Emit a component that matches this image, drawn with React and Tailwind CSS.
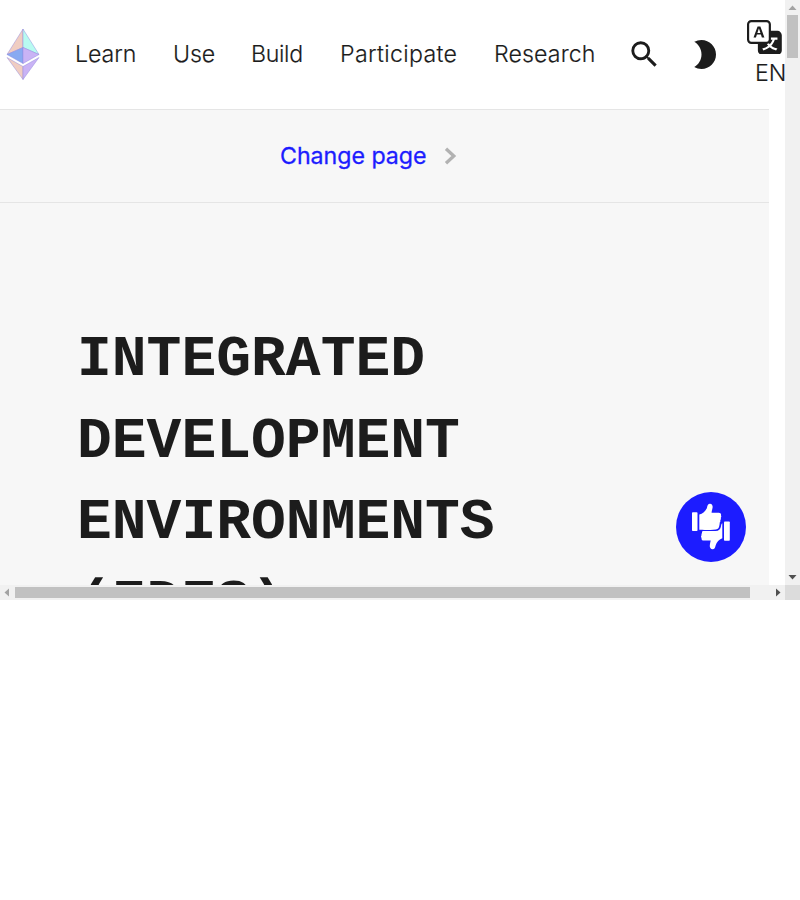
import React from "react";
import { MdSearch, MdBrightness2 } from "react-icons/md";
import { BsTranslate } from "react-icons/bs";

const links = [
  { label: "Learn", box: "w-[98px]", text: "tracking-[-0.08px]" },
  { label: "Use", box: "w-[78px]", text: "tracking-[-0.15px]" },
  { label: "Build", box: "w-[89px]", text: "tracking-[-0.35px]" },
  { label: "Participate", box: "w-[154px]", text: "tracking-[0.32px]" },
  { label: "Research", box: "w-[102px]", text: "tracking-[0.1px]" },
];

function EthLogo() {
  return (
    <svg className="mb-[1px] ml-[6px] h-[52px] w-[34px] shrink-0" viewBox="0 0 34 52">
      <g stroke="#8f84dd" strokeOpacity="0.5" strokeWidth="0.9" strokeLinejoin="round">
        <path d="M17 1 1 26.5 17 19.5Z" fill="#f0cdc2" />
        <path d="M17 1 33 26.5 17 19.5Z" fill="#b8fbf1" />
        <path d="M1 26.5 17 19.5V35.5Z" fill="#88aaf1" />
        <path d="M33 26.5 17 19.5V35.5Z" fill="#c9b3f5" />
        <path d="M1 29.5 17 38.5V51.5Z" fill="#f0cdc2" />
        <path d="M33 29.5 17 38.5V51.5Z" fill="#c9b3f5" />
      </g>
    </svg>
  );
}

function Header() {
  return (
    <header className="flex h-[109px] w-[785px] shrink-0 items-center overflow-hidden bg-white">
      <EthLogo />
      <nav className="ml-[35px] flex shrink-0 text-[23.2px] leading-[37px] font-light [-webkit-text-stroke:0.15px_#1c1c1c]">
        {links.map((l) => (
          <a key={l.label} className={`${l.box} ${l.text} block whitespace-nowrap`}>
            {l.label}
          </a>
        ))}
      </nav>
      <MdSearch className="ml-[31px] size-[34.8px] shrink-0" />
      <MdBrightness2 className="ml-[25px] size-[34.8px] shrink-0" />
      <div className="ml-[25.4px] flex w-[50px] shrink-0 flex-col">
        <BsTranslate className="size-[34.8px]" />
        <span className="mt-[2px] -mb-[2px] ml-[8px] text-[23.2px] leading-[35px] font-light [-webkit-text-stroke:0.15px_#1c1c1c]">
          EN
        </span>
      </div>
    </header>
  );
}

function Feedback() {
  return (
    <button className="absolute top-[492px] left-[676px] flex size-[70px] items-center justify-center rounded-full bg-[#1c1cff]">
      <svg className="size-[70px]" viewBox="0 0 70 70" fill="white">
        <rect x="16" y="20.3" width="5.5" height="18.7" rx="0.8" />
        <path d="M23.3 22.5c3.2-.6 6.4-3.2 7.6-6.6.5-1.6.7-3.8 2.7-4.1 2.3-.3 3.3 1.6 3 3.8-.3 2-1 3.6-1 5.1h7.2c1.6 0 2.6 1.2 2.2 2.7.5.7.3 1.7-.2 2.4.2 1 .1 1.7-.5 2.4.2 1 0 1.7-.6 2.4.1 1.3-.2 2.5-.5 3.7-.4 1.8-1.3 2.9-3.2 3.1-5.3.5-10.9.6-16.7.4Z" />
        <rect x="48" y="29.5" width="5.8" height="19.2" rx="0.8" />
        <path d="M46.3 31.2v15c-3.4 1.2-5.6 3.8-6.6 7-.5 1.8-.7 3.8-2.7 4-2.3.2-3.5-1.6-3.2-4 .2-1.7.6-3.3.9-4.7h-6.9c-1.8 0-2.7-1.1-2.2-2.6-.8-.7-.7-1.7-.1-2.6-.2-.8 0-1.5.5-2.2-.1-1 .2-1.6.9-2h12.6c3.3 0 5-1.8 5.5-4.9.2-1.2.3-2.6 1.3-3Z" />
      </svg>
    </button>
  );
}

function VerticalScrollbar() {
  return (
    <div className="flex h-[585px] w-[15px] flex-col items-center justify-between bg-[#f1f1f1]">
      <div className="flex flex-col items-center">
        <svg className="h-[15px] w-[15px]" viewBox="0 0 15 15" fill="#a3a3a3">
          <path d="M3.5 10 7.5 5.5 11.5 10Z" />
        </svg>
        <div className="h-[43px] w-[11px] bg-[#c1c1c1]" />
      </div>
      <svg className="h-[15px] w-[15px]" viewBox="0 0 15 15" fill="#505050">
        <path d="M3.5 5 7.5 9.5 11.5 5Z" />
      </svg>
    </div>
  );
}

function HorizontalScrollbar() {
  return (
    <div className="flex h-[15px] w-[800px] items-center bg-[#f1f1f1]">
      <svg className="h-[15px] w-[15px]" viewBox="0 0 15 15" fill="#a3a3a3">
        <path d="M9 3.5 4.5 7.5 9 11.5Z" />
      </svg>
      <div className="h-[11px] w-[735px] bg-[#c1c1c1]" />
      <svg className="ml-[20px] h-[15px] w-[15px]" viewBox="0 0 15 15" fill="#505050">
        <path d="M6 3.5 10.5 7.5 6 11.5Z" />
      </svg>
      <div className="size-[15px] bg-[#dcdcdc]" />
    </div>
  );
}

export default function App() {
  return (
    <div className="relative h-[900px] w-[800px] overflow-hidden bg-white font-['Inter',sans-serif] text-[#1c1c1c]">
      <div className="flex h-[585px]">
        <div className="flex h-[585px] w-[785px] flex-col overflow-hidden">
          <Header />
          <main className="h-[476px] w-[769px] overflow-hidden border-t border-[#e5e5e5] bg-[#f7f7f7]">
            <div className="flex h-[93px] items-center border-b border-[#e5e5e5] pl-[280px] text-[23.2px] font-normal text-[#1c1cff]">
              <a className="w-[147px] tracking-[-0.03px] whitespace-nowrap [-webkit-text-stroke:0.3px_#1c1cff]">
                Change page
              </a>
              <svg className="ml-[17px] h-[18px] w-[13px]" viewBox="0 0 13 18" fill="none" stroke="#b2b2b2" strokeWidth="3.3">
                <path d="M2 1.8 9.8 9 2 16.2" />
              </svg>
            </div>
            <h1 className="mt-[116.4px] ml-[77px] w-[500px] font-['Liberation_Mono',monospace] text-[58px] leading-[81.2px] font-bold uppercase">
              Integrated Development Environments (IDEs)
            </h1>
          </main>
        </div>
        <VerticalScrollbar />
      </div>
      <HorizontalScrollbar />
      <Feedback />
    </div>
  );
}
